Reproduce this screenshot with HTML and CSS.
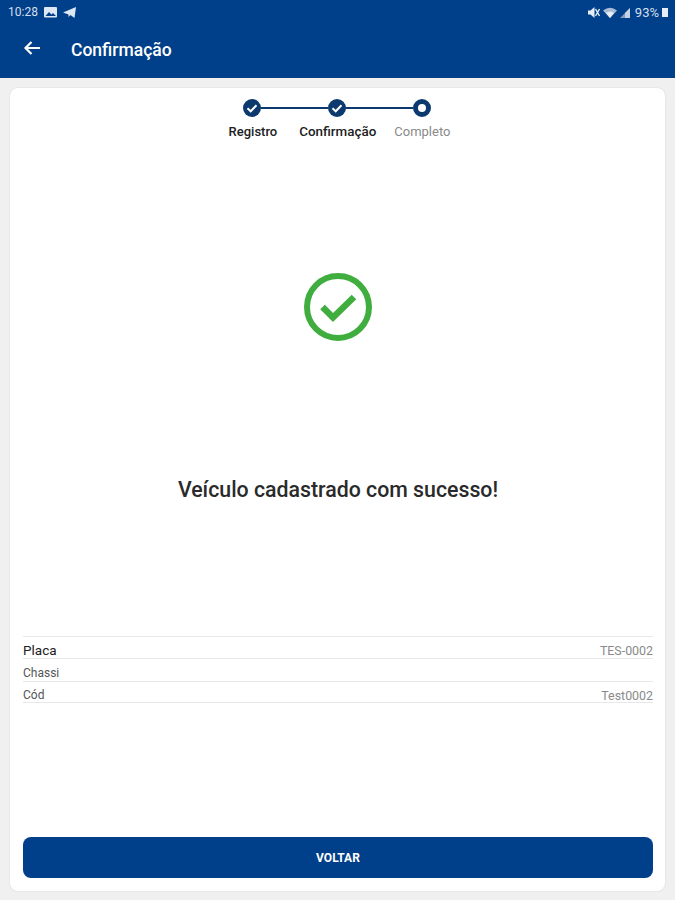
FILE: index.html
```html
<!DOCTYPE html>
<html lang="pt">
<head>
<meta charset="utf-8">
<title>Confirmação</title>
<link rel="stylesheet" href="styles.css">
</head>
<body>
<header class="appbar">
  <div class="status">
    <div class="status-left">
      <span class="time">10:28</span>
      <svg class="ic-img" width="13" height="11" viewBox="0 0 13 11"><rect x="0" y="0" width="13" height="10.5" rx="1" fill="#dfe7f2"/><path d="M1.5 9l3.5-4 2.5 2.5 1.5-1.5 3 3z" fill="#00408a"/></svg>
      <svg class="ic-send" width="14" height="11" viewBox="0 0 14 11"><path d="M0 5.5L13 0l-1.5 11-4-3-2 2V7.5z" fill="#dfe7f2"/></svg>
    </div>
    <div class="status-right">
      <svg width="12" height="11" viewBox="0 0 12 11"><path d="M0 3.5h2.5L6.5 0v11L2.5 7.5H0z" fill="#e8edf5"/><path d="M7.5 2l4 7M11.5 2l-4 7" stroke="#e8edf5" stroke-width="1.4"/></svg>
      <svg width="14" height="11" viewBox="0 0 14 11"><path d="M0 3.5Q7-2 14 3.5L7 11z" fill="#a9bcd6"/><path d="M3 6Q7 3 11 6L7 11z" fill="#e8edf5"/></svg>
      <svg width="10" height="11" viewBox="0 0 10 11"><path d="M0 11L10 1v10z" fill="#7f9cc2"/><path d="M5 11V6l5-5v10z" fill="#c5d2e4"/></svg>
      <span class="batt-text">93%</span>
      <span class="batt"></span>
    </div>
  </div>
  <div class="toolbar">
    <svg class="back" width="18" height="16" viewBox="0 0 18 16"><path d="M17 8H3M8.5 2L2.5 8l6 6" fill="none" stroke="#fff" stroke-width="2.2"/></svg>
    <h1 class="title">Confirmação</h1>
  </div>
</header>

<main class="card">
  <section class="stepper">
    <div class="step-track">
      <span class="dot"><svg width="18" height="18" viewBox="0 0 18 18"><path d="M4.5 9.3l3.2 3 5.8-6" fill="none" stroke="#fff" stroke-width="2"/></svg></span>
      <span class="line"></span>
      <span class="dot"><svg width="18" height="18" viewBox="0 0 18 18"><path d="M4.5 9.3l3.2 3 5.8-6" fill="none" stroke="#fff" stroke-width="2"/></svg></span>
      <span class="line"></span>
      <span class="dot dot-current"></span>
    </div>
    <div class="step-labels">
      <span class="step-label step-a">Registro</span>
      <span class="step-label step-b">Confirmação</span>
      <span class="step-label step-c">Completo</span>
    </div>
  </section>

  <section class="result">
    <svg class="success" width="70" height="70" viewBox="0 0 70 70"><circle cx="35" cy="35" r="31" fill="none" stroke="#3fae3f" stroke-width="6"/><path d="M19.5 35l10.5 10.5 21-20.5" fill="none" stroke="#3fae3f" stroke-width="6.5"/></svg>
    <p class="message">Veículo cadastrado com sucesso!</p>
  </section>

  <section class="details">
    <div class="row row-main"><span class="key">Placa</span><span class="val">TES-0002</span></div>
    <div class="row"><span class="key">Chassi</span><span class="val"></span></div>
    <div class="row row-last"><span class="key">Cód</span><span class="val">Test0002</span></div>
  </section>

  <button class="btn" type="button">VOLTAR</button>
</main>
</body>
</html>
```
FILE: styles.css
```css
* { box-sizing: border-box; }
html, body { margin: 0; padding: 0; }
body {
  width: 675px;
  height: 900px;
  overflow: hidden;
  background: #f0f0f0;
  font-family: Roboto, "Liberation Sans", sans-serif;
  color: #212121;
}
.appbar {
  height: 78px;
  background: #00408a;
  color: #fff;
}
.status {
  height: 22px;
  padding: 2px 7px 0 8px;
  display: flex;
  justify-content: space-between;
  align-items: center;
  color: #d5dfec;
  font-size: 12px;
}
.status-left, .status-right { display: flex; align-items: center; }
.status-left { gap: 6px; }
.status-right { gap: 3px; }
.batt-text { margin-left: 2px; font-size: 13px; }
.batt { width: 6px; height: 9px; background: #e8edf5; }
.toolbar {
  height: 56px;
  padding: 0 0 0 23px;
  display: flex;
  align-items: center;
  gap: 30px;
}
.back { margin-top: -5px; }
.title {
  margin: 0;
  font-size: 17.5px;
  font-weight: 500;
  color: #fff;
}
.card {
  margin: 10px 10px 0;
  height: 803px;
  background: #fff;
  border-radius: 8px;
  box-shadow: 0 0 2px rgba(0,0,0,.12);
  padding: 11px 12px 13px 13px;
  display: flex;
  flex-direction: column;
}
.stepper { height: 47px; }
.step-track {
  display: flex;
  align-items: center;
  justify-content: center;
  padding-right: 2px;
}
.dot {
  width: 18px;
  height: 18px;
  border-radius: 50%;
  background: #0d3a6e;
  flex: none;
  display: flex;
}
.dot-current {
  background: #fff;
  border: 5px solid #0d3a6e;
}
.line { width: 67px; height: 2px; background: #0d3a6e; }
.step-labels {
  height: 16px;
  margin-top: 7px;
  padding-left: 3px;
  display: flex;
  justify-content: center;
  font-size: 13px;
}
.step-label { font-weight: 500; color: #212121; white-space: nowrap; }
.step-b { margin: 0 18px 0 22px; font-size: 13.4px; }
.step-c { font-weight: 400; color: #8a8a8a; }
.result {
  height: 490px;
  padding-top: 126px;
  display: flex;
  flex-direction: column;
  align-items: center;
}
.message {
  margin: 135px 0 0;
  font-size: 21.3px;
  font-weight: 500;
  color: #2a2a2a;
}
.details { border-top: 1px solid #e8e8e8; height: 201px; }
.row {
  height: 23px;
  padding-top: 6px;
  display: flex;
  justify-content: space-between;
  align-items: center;
  border-bottom: 1px solid #e8e8e8;
  font-size: 12px;
  color: #555;
}
.row-main { height: 22px; padding-top: 5px; }
.row-last { height: 21px; padding-top: 6px; }
.row-main .key { font-size: 13.5px; color: #212121; }
.val { color: #8a8a8a; font-size: 12.4px; }
.btn {
  width: 630px;
  height: 41px;
  background: #00408a;
  color: #fff;
  border: 0;
  border-radius: 8px;
  font-family: Roboto, "Liberation Sans", sans-serif;
  font-size: 12px;
  font-weight: 700;
  padding: 0;
}
```
